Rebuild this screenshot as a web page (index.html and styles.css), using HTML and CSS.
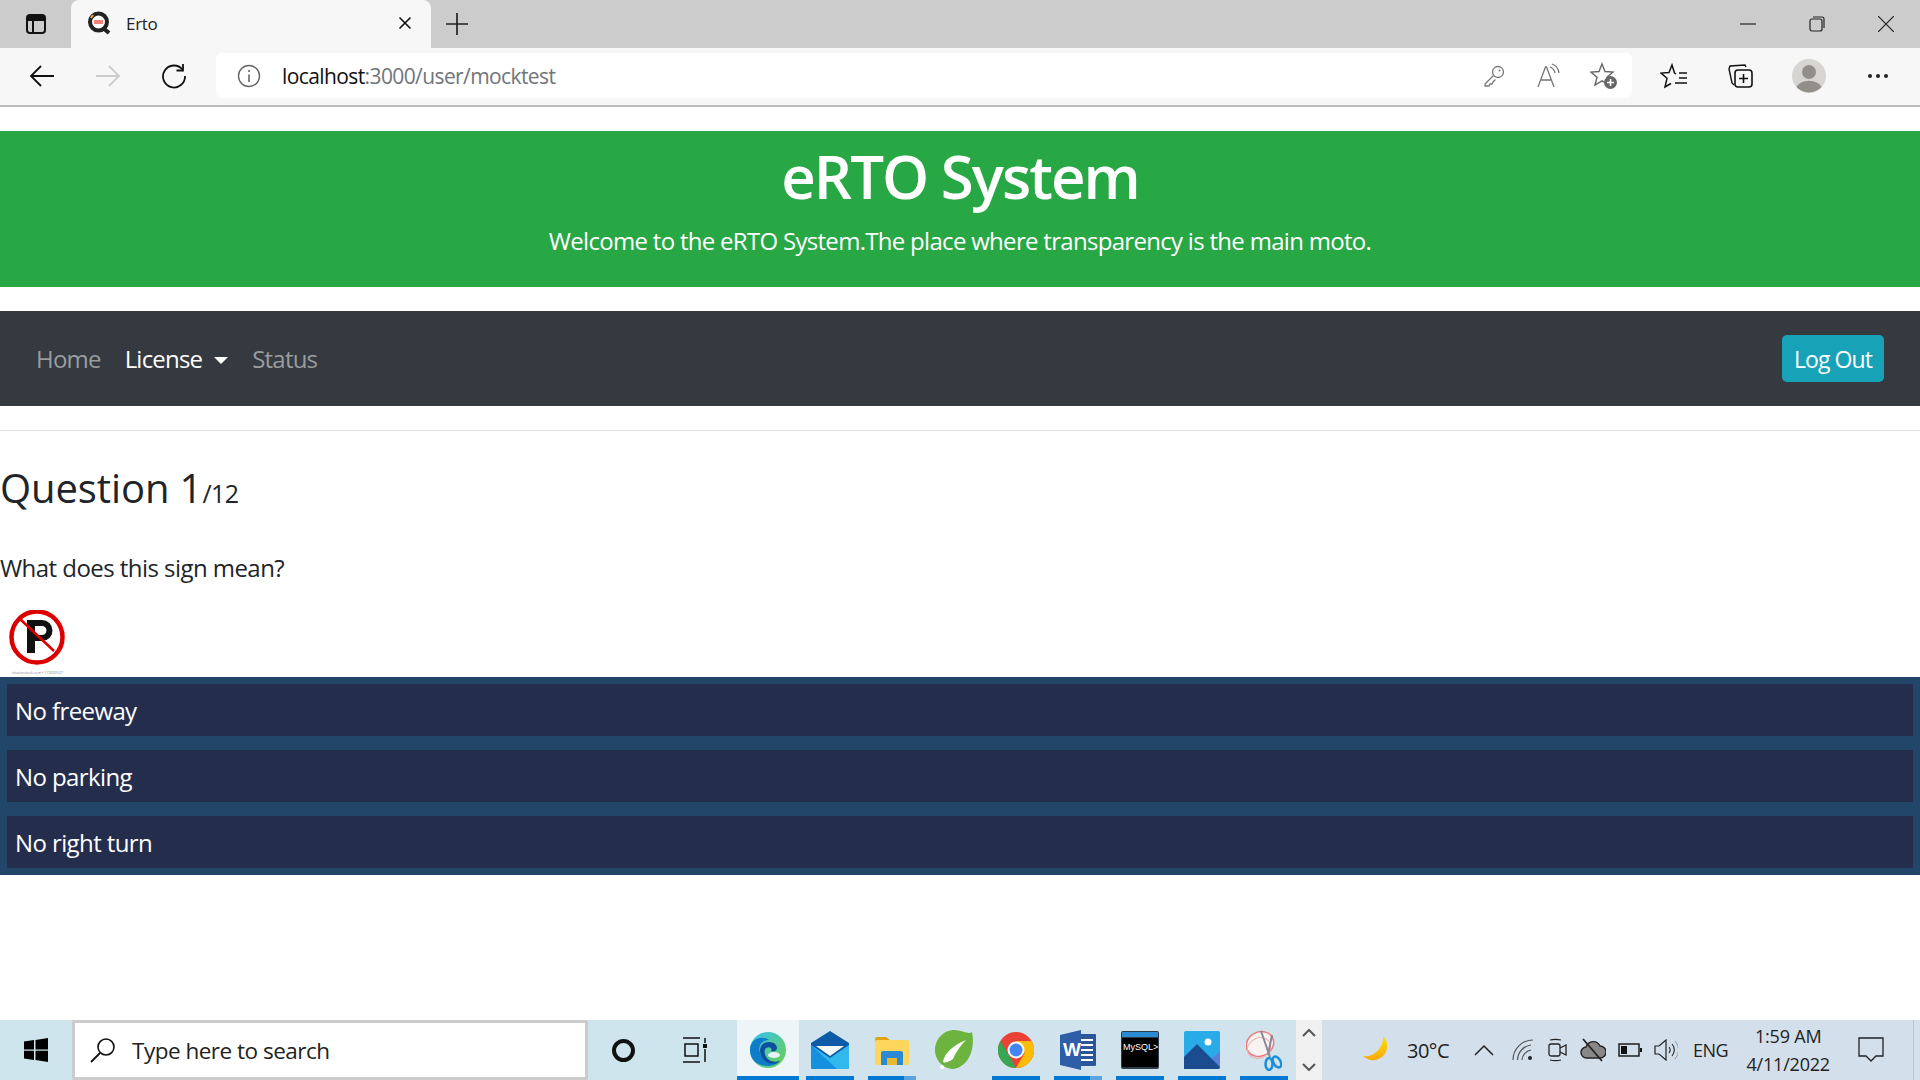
FILE: index.html
```html
<!DOCTYPE html>
<html lang="en">

<head>
    <meta charset="UTF-8">
    <title>Erto</title>
    <link rel="stylesheet" href="styles.css">
</head>

<body>
    <!-- browser window top -->
    <div class="tabstrip">
        <svg class="ic side-btn" viewBox="0 0 24 24" width="24" height="24"><rect x="3" y="3" width="18" height="18" rx="3" fill="none" stroke="#111" stroke-width="2"/><path d="M3 8h18M9 8v13" stroke="#111" stroke-width="2" fill="none"/><path d="M4 4h16v4H4z" fill="#111"/></svg>
        <div class="tab">
            <svg class="favicon" viewBox="0 0 24 24" width="24" height="24"><circle cx="11.5" cy="11" r="8.5" fill="#fff" stroke="#222" stroke-width="4"/><path d="M16 17l6 5" stroke="#222" stroke-width="4"/><path d="M7 9h9v4H7z" fill="#f2837b"/><path d="M4 7l2-3" stroke="#e8b33a" stroke-width="2"/></svg>
            <span class="tab-title">Erto</span>
            <svg class="tab-close" viewBox="0 0 14 14" width="14" height="14"><path d="M1.5 1.5l11 11M12.5 1.5l-11 11" stroke="#111" stroke-width="1.6"/></svg>
        </div>
        <svg class="tab-new" viewBox="0 0 22 22" width="22" height="22"><path d="M11 0v22M0 11h22" stroke="#222" stroke-width="1.7"/></svg>
        <div class="win-btns">
            <svg viewBox="0 0 16 16" width="16" height="16"><path d="M0 8h16" stroke="#222" stroke-width="1.2"/></svg>
            <svg viewBox="0 0 16 16" width="16" height="16"><rect x="1" y="3" width="12" height="12" rx="2" fill="none" stroke="#222" stroke-width="1.2"/><path d="M4 1h9a2 2 0 0 1 2 2v9" fill="none" stroke="#222" stroke-width="1.2"/></svg>
            <svg viewBox="0 0 16 16" width="16" height="16"><path d="M0 0l16 16M16 0L0 16" stroke="#222" stroke-width="1.2"/></svg>
        </div>
    </div>

    <div class="toolbar">
        <svg class="nav-ic back" viewBox="0 0 26 26" width="26" height="26"><path d="M25 13H2M12 3L2 13l10 10" fill="none" stroke="#111" stroke-width="1.8"/></svg>
        <svg class="nav-ic fwd" viewBox="0 0 26 26" width="26" height="26"><path d="M1 13h23M14 3l10 10-10 10" fill="none" stroke="#ccc" stroke-width="1.8"/></svg>
        <svg class="nav-ic reload" viewBox="0 0 26 26" width="26" height="26"><path d="M21.5 6.5A11 11 0 1 0 24 13" fill="none" stroke="#111" stroke-width="1.8"/><path d="M22 1v6.5h-6.5" fill="none" stroke="#111" stroke-width="1.8"/></svg>
        <div class="addressbar">
            <svg class="info" viewBox="0 0 24 24" width="24" height="24"><circle cx="12" cy="12" r="10.5" fill="none" stroke="#666" stroke-width="1.4"/><path d="M12 10.5V18" stroke="#666" stroke-width="1.6"/><circle cx="12" cy="7" r="1.1" fill="#666"/></svg>
            <span class="url">localhost<span class="url-rest">:3000/user/mocktest</span></span>
            <div class="addr-icons">
                <svg viewBox="0 0 24 24" width="24" height="24"><circle cx="16" cy="8" r="5.5" fill="none" stroke="#777" stroke-width="1.3"/><path d="M11.5 11.5L3 20v2h4l1-2h2l1-2 2.5-2.5" fill="none" stroke="#777" stroke-width="1.3"/><circle cx="17.5" cy="6.5" r="1" fill="#777"/></svg>
                <svg class="read-aloud" viewBox="0 0 26 26" width="26" height="26"><path d="M2 24L9.5 4h1L18 24M5 17h10" fill="none" stroke="#777" stroke-width="1.3"/><path d="M14 4a8 8 0 0 1 5 6M16 1a11 11 0 0 1 7 9" fill="none" stroke="#777" stroke-width="1.3"/></svg>
                <svg viewBox="0 0 28 28" width="28" height="28"><path d="M12 2l3 7.5 8 .6-6 5.2 2 7.7-7-4.2-7 4.2 2-7.7-6-5.200 8-.6z" fill="none" stroke="#666" stroke-width="1.4"/><circle cx="20.500" cy="20.500" r="6.500" fill="#666"/><path d="M20.500 17v7M17 20.500h7" stroke="#fff" stroke-width="1.600"/></svg>
            </div>
        </div>
        <div class="tool-icons">
            <svg viewBox="0 0 28 28" width="28" height="28"><path d="M16 12l-1.500-1L12 3 9 10.500l-8 .6 6 5.200L5 25l6-3.500M19 11h8M19 16h8M15 21h12" fill="none" stroke="#111" stroke-width="1.500"/></svg>
            <svg viewBox="0 0 28 28" width="28" height="28"><rect x="9" y="8" width="17" height="17" rx="3" fill="none" stroke="#111" stroke-width="1.600"/><path d="M17.500 12v9M13 16.500h9" stroke="#111" stroke-width="1.600"/><path d="M20 5l-1-2-15 1-1 3 3 14 2 2" fill="none" stroke="#111" stroke-width="1.400"/></svg>
            <svg class="avatar" viewBox="0 0 34 34" width="34" height="34"><circle cx="17" cy="17" r="17" fill="#d6d5d2"/><circle cx="17" cy="13" r="7" fill="#928f8a"/><path d="M4.500 28a13 8.500 0 0 1 25 0 17 17 0 0 1-25 0z" fill="#928f8a"/></svg>
            <svg viewBox="0 0 22 6" width="22" height="6"><circle cx="3" cy="3" r="2" fill="#222"/><circle cx="11" cy="3" r="2" fill="#222"/><circle cx="19" cy="3" r="2" fill="#222"/></svg>
        </div>
    </div>

    <main class="page">
        <header class="banner">
            <h1>eRTO System</h1>
            <p>Welcome to the eRTO System.The place where transparency is the main moto.</p>
        </header>

        <nav class="navbar">
            <a class="nav-link">Home</a>
            <a class="nav-link active">License<span class="caret"></span></a>
            <a class="nav-link">Status</a>
            <button class="logout">Log Out</button>
        </nav>
        <hr class="divider">

        <h2 class="question">Question 1<small>/12</small></h2>
        <p class="prompt">What does this sign mean?</p>

        <svg class="sign" viewBox="0 0 74 67" width="74" height="67">
            <circle cx="37" cy="27" r="25.500" fill="#fff" stroke="#dd0000" stroke-width="4.500"/>
            <path d="M27 43V10h15a10.500 10.500 0 0 1 0 21H35v12z" fill="#111"/>
            <path d="M35 16v9h7a4.500 4.500 0 0 0 0-9z" fill="#fff"/>
            <path d="M20 9l34 32" stroke="#dd0000" stroke-width="2.500"/>
            <text class="sign-credit" x="12" y="64">shutterstock.com • 119033527</text>
        </svg>

        <ul class="options">
            <li>No freeway</li>
            <li>No parking</li>
            <li>No right turn</li>
        </ul>
    </main>

    <footer class="taskbar">
        <svg class="start" viewBox="0 0 24 24" width="24" height="24"><path d="M0 3.500l10-1.400V11.400H0zM11.500 1.900L24 0v11.400H11.500zM0 12.700h10v9.300L0 20.500zM11.500 12.700H24V24l-12.500-1.900z" fill="#000"/></svg>
        <div class="searchbox">
            <svg viewBox="0 0 26 26" width="26" height="26"><circle cx="16" cy="10" r="8" fill="none" stroke="#111" stroke-width="1.600"/><path d="M10 16L1 25" stroke="#111" stroke-width="1.800"/></svg>
            <span>Type here to search</span>
        </div>
        <div class="cortana"></div>
        <svg class="taskview" viewBox="0 0 28 26" width="28" height="26"><path d="M1 1h17M1 25h17M3 7h13v12H3zM23 1v5M23 12v13" fill="none" stroke="#111" stroke-width="1.500"/><rect x="21" y="7" width="4" height="4" fill="#111"/></svg>

        <div class="apps">
            <div class="app active running">
                <svg viewBox="0 0 38 38" width="38" height="38"><defs><linearGradient id="edgeA" x1="0" y1="0" x2="1" y2="1"><stop offset="0" stop-color="#35c1f1"/><stop offset="1" stop-color="#6ed04a"/></linearGradient></defs><circle cx="19" cy="19" r="18" fill="url(#edgeA)"/><path d="M1 19C1 8 13 4 20 9c-9 0-12 8-8 15 3 6 12 9 19 6-8 9-30 6-30-11z" fill="#0f7cc9"/><path d="M12 24c-3-7 1-13 8-13 5 0 8 3 8 6 0 3-4 4-6 3 2-3-2-5-5-3-3 3-1 9 3 12 3 2 7 2 11 1-6 5-16 3-19-6z" fill="#0d4f9e"/><ellipse cx="25" cy="24" rx="6" ry="3" fill="#e6f3f8"/></svg>
            </div>
            <div class="app running">
                <svg viewBox="0 0 38 38" width="38" height="38"><path d="M0 12L19 0l19 12v24a2 2 0 0 1-2 2H2a2 2 0 0 1-2-2z" fill="#0d5aa7"/><path d="M5 15h28L19 25z" fill="#f4f6f8"/><path d="M0 14l19 13 19-13v22a2 2 0 0 1-2 2H2a2 2 0 0 1-2-2z" fill="#31b9ee"/><path d="M0 14l26 24H2a2 2 0 0 1-2-2z" fill="#1490df"/></svg>
            </div>
            <div class="app running partial">
                <svg viewBox="0 0 34 34" width="34" height="34"><path d="M0 6a2 2 0 0 1 2-2h9l4 3h17v6H0z" fill="#e0a50e"/><rect y="7" width="34" height="25" rx="2" fill="#ffd65c"/><path d="M6 32V20a2 2 0 0 1 2-2h18a2 2 0 0 1 2 2v12h-6v-7H12v7z" fill="#2a8ad4"/><rect x="12" y="25" width="10" height="7" fill="#e8b92f"/></svg>
            </div>
            <div class="app">
                <svg viewBox="0 0 38 42" width="38" height="42"><path d="M19 1c8 0 15 5 18 2 3 14-1 33-18 37C8 40 0 31 0 21 0 10 9 1 19 1z" fill="#6db33f"/><path d="M8 33c1-9 11-17 23-22-6 6-11 14-13 19-4 3-8 4-10 3z" fill="#fff"/><path d="M7 36a2 2 0 1 0 .1 0z" fill="#fff"/></svg>
            </div>
            <div class="app running">
                <svg viewBox="0 0 36 36" width="36" height="36"><circle cx="18" cy="18" r="18" fill="#ea4335"/><path d="M18 36A18 18 0 0 1 2.400 9L11 23.500z" fill="#34a853"/><path d="M18 36l8.800-15L18 9h15.600A18 18 0 0 1 18 36z" fill="#fbbc05"/><circle cx="18" cy="18" r="8.500" fill="#fff"/><circle cx="18" cy="18" r="6.500" fill="#4285f4"/></svg>
            </div>
            <div class="app running partial">
                <svg viewBox="0 0 36 40" width="36" height="40"><rect x="14" y="4" width="22" height="32" rx="1" fill="#2b579a"/><path d="M20 10h13M20 15h13M20 20h13M20 25h13M20 30h13" stroke="#fff" stroke-width="2"/><path d="M0 5l21-5v40L0 35z" fill="#2f5ea8"/><text class="word-w" x="3" y="26">W</text></svg>
            </div>
            <div class="app running">
                <svg viewBox="0 0 38 38" width="38" height="38"><rect width="38" height="38" rx="2" fill="#2d3a48"/><rect x="1" y="1" width="36" height="5" fill="#2a8ad4"/><rect x="1" y="7" width="36" height="29" fill="#000"/><text class="mysql-text" x="2" y="19">MySQL&gt;</text></svg>
            </div>
            <div class="app running">
                <svg viewBox="0 0 36 38" width="36" height="38"><rect width="36" height="38" rx="2" fill="#29abe8"/><circle cx="24" cy="11" r="3.500" fill="#fff"/><path d="M0 38V26L13 13l15 15 8-4v12a2 2 0 0 1-2 2z" fill="#1a4c8f"/><path d="M20 20l8 8 8-8v16z" fill="#5a7fd6"/></svg>
            </div>
            <div class="app running">
                <svg viewBox="0 0 36 42" width="36" height="42"><ellipse cx="14" cy="15" rx="14" ry="12" transform="rotate(-25 14 15)" fill="#f8f3f3" stroke="#e77" stroke-width="1.500"/><ellipse cx="13" cy="19" rx="12" ry="10" transform="rotate(-25 13 19)" fill="none" stroke="#f0b0b0" stroke-width="1"/><path d="M15 2l9 26M26 6l-4 20" stroke="#889" stroke-width="2"/><ellipse cx="23" cy="35" rx="3.500" ry="6" fill="none" stroke="#1c8fd8" stroke-width="2.500"/><ellipse cx="31" cy="33" rx="3.500" ry="6" transform="rotate(-30 31 33)" fill="none" stroke="#1c8fd8" stroke-width="2.500"/></svg>
            </div>
        </div>

        <div class="app-scroll">
            <svg viewBox="0 0 14 8" width="14" height="8"><path d="M1 7l6-6 6 6" fill="none" stroke="#555" stroke-width="2"/></svg>
            <svg viewBox="0 0 14 8" width="14" height="8"><path d="M1 1l6 6 6-6" fill="none" stroke="#555" stroke-width="2"/></svg>
        </div>

        <div class="tray">
            <svg class="moon" viewBox="0 0 28 28" width="28" height="28"><defs><linearGradient id="moonG" x1="0" y1="0" x2="0" y2="1"><stop offset="0" stop-color="#ffe100"/><stop offset="1" stop-color="#f9a80f"/></linearGradient></defs><path d="M20 0a14 14 0 1 1-20 20c9 2 21-7 20-20z" fill="url(#moonG)"/></svg>
            <span class="temp">30°C</span>
            <svg class="t-chev" viewBox="0 0 20 12" width="20" height="12"><path d="M1 11l9-9 9 9" fill="none" stroke="#222" stroke-width="1.500"/></svg>
            <svg class="t-wifi" viewBox="0 0 22 22" width="22" height="22"><path d="M1 21a20 20 0 0 1 20-20M5.500 21A15.500 15.500 0 0 1 19 6M10 21a11 11 0 0 1 9-10" fill="none" stroke="#555" stroke-width="1.200"/><circle cx="18" cy="19" r="2" fill="#222"/></svg>
            <svg class="t-meet" viewBox="0 0 20 28" width="20" height="28"><path d="M3 4a10 3 0 0 1 11 0M3 24a10 3 0 0 0 11 0" fill="none" stroke="#222" stroke-width="1.200"/><rect x="2" y="8" width="11" height="12" rx="2" fill="none" stroke="#222" stroke-width="1.300"/><path d="M13 12l6-3v10l-6-3" fill="none" stroke="#222" stroke-width="1.300"/></svg>
            <svg class="t-cloud" viewBox="0 0 26 26" width="26" height="26"><path d="M7 21a5.500 5.500 0 0 1-1-11 7.500 7.500 0 0 1 14-1 6 6 0 0 1 0 12z" fill="#888" stroke="#222" stroke-width="1.400"/><path d="M3 2l19 22" stroke="#222" stroke-width="1.800"/></svg>
            <svg class="t-batt" viewBox="0 0 24 14" width="24" height="14"><rect x="1" y="1" width="20" height="12" fill="none" stroke="#111" stroke-width="1.400"/><rect x="3" y="3" width="6" height="8" fill="#111"/><rect x="22" y="5" width="2" height="4" fill="#111"/></svg>
            <svg class="t-vol" viewBox="0 0 24 22" width="24" height="22"><path d="M1 7h4l7-6v20l-7-6H1z" fill="none" stroke="#222" stroke-width="1.200"/><path d="M15 8a5 5 0 0 1 0 6M18 5a9 9 0 0 1 0 12" fill="none" stroke="#222" stroke-width="1.100"/><path d="M21 2a13 13 0 0 1 0 18" fill="none" stroke="#999" stroke-width="1"/></svg>
            <span class="lang">ENG</span>
            <div class="clock"><span>1:59 AM</span><span>4/11/2022</span></div>
            <svg class="t-note" viewBox="0 0 26 26" width="26" height="26"><path d="M1 1h24v18h-7l-5 5-5-5H1z" fill="none" stroke="#222" stroke-width="1.300"/></svg>
        </div>
    </footer>
</body>

</html>
```

FILE: styles.css
```css
* {
    box-sizing: border-box;
}

html,
body {
    margin: 0;
    padding: 0;
}

body {
    height: 100vh;
    overflow: hidden;
    display: flex;
    flex-direction: column;
    background-color: #ffffff;
    color: #212529;
    font-family: "Open Sans", "Noto Sans", sans-serif;
}

svg {
    display: block;
    flex: none;
}

/* tab strip */
.tabstrip {
    height: 48px;
    flex: none;
    display: flex;
    align-items: center;
    background-color: #cccccc;
    padding-left: 24px;
}

.tab {
    width: 360px;
    height: 48px;
    margin-left: 23px;
    padding: 0 19px 2px 16px;
    display: flex;
    align-items: center;
    background-color: #f7f7f7;
    border-radius: 8px 8px 0 0;
}

.tab-title {
    margin-left: 15px;
    font-size: 17px;
    letter-spacing: -0.3px;
    color: #222;
}

.tab-close {
    margin-left: auto;
}

.tab-new {
    margin-left: 15px;
}

.win-btns {
    margin-left: auto;
    padding-right: 26px;
    display: flex;
    align-items: center;
    gap: 53px;
}

/* address row */
.toolbar {
    height: 59px;
    flex: none;
    display: flex;
    align-items: center;
    padding: 0 31px 2px 29px;
    background-color: #f7f7f7;
    border-bottom: 2px solid #bbbbbb;
}

.nav-ic.fwd {
    margin-left: 40px;
}

.nav-ic.reload {
    margin-left: 40px;
}

.addressbar {
    width: 1416px;
    height: 45px;
    margin-left: 29px;
    padding: 0 14px 0 21px;
    display: flex;
    align-items: center;
    background-color: #ffffff;
    border-radius: 6px;
}

.url {
    margin-left: 21px;
    font-size: 21px;
    letter-spacing: -0.6px;
    color: #111;
}

.url-rest {
    color: #70757a;
}

.addr-icons {
    margin-left: auto;
    display: flex;
    align-items: center;
    gap: 28px;
}

.read-aloud {
    margin-left: 2px;
}

.tool-icons {
    margin-left: auto;
    display: flex;
    align-items: center;
    gap: 38px;
}

.tool-icons .avatar {
    margin-right: 3px;
}

/* page */
.page {
    flex: 1;
    min-height: 0;
    padding-top: 24px;
}

.banner {
    height: 156px;
    padding-top: 9px;
    background-color: #28a745;
    color: #ffffff;
    text-align: center;
}

.banner h1 {
    margin: 0;
    font-size: 60px;
    font-weight: 600;
    line-height: 72px;
    letter-spacing: -2px;
}

.banner p {
    margin: 13px 0 0;
    font-size: 24px;
    line-height: 32px;
    letter-spacing: -0.7px;
}

.navbar {
    height: 95px;
    margin-top: 24px;
    padding: 0 36px;
    display: flex;
    align-items: center;
    background-color: #343a40;
}

.nav-link {
    margin-right: 24px;
    font-size: 24px;
    letter-spacing: -0.8px;
    color: #9a9c9f;
}

.nav-link.active {
    color: #ffffff;
}

.caret {
    display: inline-block;
    margin-left: 12px;
    vertical-align: 4px;
    border-top: 7px solid #ffffff;
    border-left: 7px solid transparent;
    border-right: 7px solid transparent;
}

.logout {
    margin-left: auto;
    width: 102px;
    height: 47px;
    padding: 0;
    border: none;
    border-radius: 5px;
    background-color: #17a2b8;
    color: #ffffff;
    font-family: inherit;
    font-size: 23px;
    letter-spacing: -0.9px;
}

.divider {
    height: 1px;
    margin: 24px 0 0;
    border: none;
    background-color: #e2e2e2;
}

.question {
    margin: 30px 0 0;
    font-size: 40px;
    font-weight: 400;
    line-height: 54px;
    letter-spacing: -0.1px;
}

.question small {
    font-size: 25px;
    letter-spacing: -0.5px;
}

.prompt {
    margin: 32px 0 0;
    font-size: 24px;
    line-height: 32px;
    letter-spacing: -0.55px;
}

.sign {
    margin-top: 26px;
}

.sign-credit {
    font-size: 3.600px;
    fill: #888;
}

.options {
    margin: 0;
    padding: 7px;
    list-style: none;
    display: flex;
    flex-direction: column;
    gap: 14px;
    background-color: #22466a;
}

.options li {
    height: 52px;
    padding-left: 8px;
    display: flex;
    align-items: center;
    background-color: #252d4d;
    color: #ffffff;
    font-size: 24px;
    letter-spacing: -0.6px;
}

/* windows taskbar */
.taskbar {
    height: 60px;
    flex: none;
    display: flex;
    align-items: center;
    padding-left: 24px;
    background-color: #cfe5ee;
}

.searchbox {
    width: 516px;
    height: 60px;
    margin-left: 24px;
    padding-left: 15px;
    display: flex;
    align-items: center;
    gap: 16px;
    background-color: #ffffff;
    border: 3px solid #cccccc;
    font-size: 22.500px;
    letter-spacing: -0.5px;
    color: #222;
}

.cortana {
    width: 23px;
    height: 23px;
    margin-left: 24px;
    border: 4px solid #111;
    border-radius: 50%;
}

.taskview {
    margin-left: 47px;
}

.apps {
    height: 60px;
    margin-left: 27px;
    display: flex;
    background-color: #d1e3ed;
}

.app {
    width: 62px;
    height: 60px;
    display: flex;
    align-items: center;
    justify-content: center;
    position: relative;
}

.app.active {
    background-color: #edf5f9;
}

.app.running::after {
    content: "";
    position: absolute;
    left: 7px;
    right: 7px;
    bottom: 0;
    height: 4px;
    background-color: #0078d4;
}

.app.active::after {
    left: 0;
    right: 0;
}

.app.partial::after {
    background: linear-gradient(to right, #0078d4 75%, #5aa5e0 75%);
}

.word-w {
    font-family: "Liberation Sans", sans-serif;
    font-weight: 700;
    font-size: 19px;
    fill: #fff;
}

.mysql-text {
    font-family: "Liberation Sans", sans-serif;
    font-size: 9px;
    fill: #fff;
}

.app-scroll {
    width: 26px;
    height: 60px;
    margin-left: 1px;
    padding: 9px 0;
    display: flex;
    flex-direction: column;
    align-items: center;
    justify-content: space-between;
    background-color: #f0f0f0;
}

.tray {
    flex: 1;
    height: 60px;
    display: flex;
    align-items: center;
    padding-left: 41px;
    background-color: #d3dfea;
    box-shadow: inset -6px 0 0 #d6e0ea, inset -7px 0 0 #bcc8d4;
    font-size: 20px;
    color: #222;
}

.temp {
    margin-left: 16px;
    letter-spacing: -0.5px;
}

.t-chev {
    margin-left: 25px;
}

.t-wifi {
    margin-left: 18px;
}

.t-meet {
    margin-left: 13px;
}

.t-cloud {
    margin-left: 13px;
}

.t-batt {
    margin-left: 12px;
}

.t-vol {
    margin-left: 12px;
}

.lang {
    margin-left: 15px;
    font-size: 18px;
    letter-spacing: -0.5px;
}

.clock {
    width: 100px;
    margin-left: 10px;
    display: flex;
    flex-direction: column;
    align-items: center;
    gap: 3px;
    font-size: 18px;
    line-height: 25px;
    letter-spacing: -0.2px;
}

.t-note {
    margin-left: 20px;
}
```
